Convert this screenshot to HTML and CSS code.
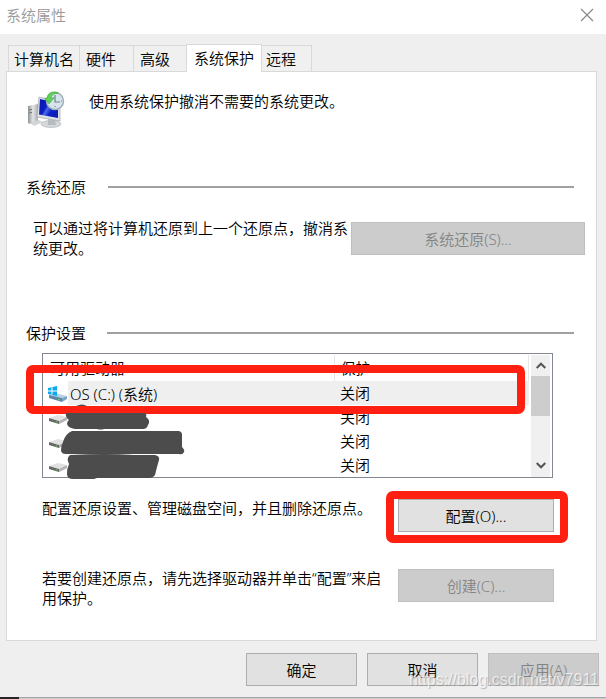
FILE: index.html
```html
<!DOCTYPE html>
<html lang="zh-CN">
<head>
<meta charset="utf-8">
<title>系统属性</title>
<link rel="stylesheet" href="styles.css">
</head>
<body>
<div class="window">
  <header class="titlebar">
    <h1 class="title">系统属性</h1>
    <button class="close" type="button" aria-label="关闭">
      <svg width="14" height="14" viewBox="0 0 14 14"><path d="M1 1L13 13M13 1L1 13" stroke="#858585" stroke-width="1.1" fill="none"/></svg>
    </button>
  </header>

  <nav class="tabs">
    <button class="tab" type="button">计算机名</button>
    <button class="tab" type="button">硬件</button>
    <button class="tab" type="button">高级</button>
    <button class="tab active" type="button">系统保护</button>
    <button class="tab" type="button">远程</button>
  </nav>

  <main class="panel">
    <div class="intro">
      <svg class="intro-icon" width="38" height="38" viewBox="0 0 38 38">
        <defs>
          <linearGradient id="screen" x1="0" y1="0" x2="1" y2=".6"><stop offset="0" stop-color="#0416a8"/><stop offset=".45" stop-color="#0d1fc4"/><stop offset=".55" stop-color="#4a6ce8"/><stop offset=".75" stop-color="#0c20c8"/><stop offset="1" stop-color="#0a1db5"/></linearGradient>
          <linearGradient id="case" x1="0" y1="0" x2="1" y2="0"><stop offset="0" stop-color="#8e9294"/><stop offset=".5" stop-color="#e4e6e7"/><stop offset="1" stop-color="#a9adaf"/></linearGradient>
        </defs>
        <path d="M1 15l10-2v18l-8 2-2-1z" fill="url(#case)"/>
        <path d="M2 19l3-.6M2 22l3-.6" stroke="#6f7476"/>
        <path d="M3 32l9-3 4 2-9 4z" fill="#d2d5d6"/>
        <ellipse cx="24" cy="33" rx="10" ry="3.500" fill="#d5d8da" stroke="#a9aeb1" stroke-width=".6"/>
        <path d="M21 28l7 1 1 5h-8z" fill="#b7bcc0"/>
        <path d="M12 6l21 5v19l-23-4z" fill="#dde1e5" stroke="#9fa6ac" stroke-width=".7"/>
        <path d="M13 8l18 4v15l-19-3.500z" fill="url(#screen)"/>
        <circle cx="28" cy="10" r="8.500" fill="#d7e4ec" stroke="#9eafba" stroke-width="1.500"/>
        <path d="M28 4v7h5M28 15v1M34 10h1" stroke="#6d8291" stroke-width="1.200" fill="none"/>
        <path d="M31 1.500C24-.5 20 3 20.500 7l-3 .2 4.500 5.600 5-6-3 .2C24 4 27 2 31 2.500z" fill="#62cf5a" stroke="#35a83c" stroke-width=".6"/>
      </svg>
      <p>使用系统保护撤消不需要的系统更改。</p>
    </div>

    <section class="restore">
      <h2 class="heading">系统还原</h2>
      <div class="restore-row">
        <p>可以通过将计算机还原到上一个还原点，撤消系统更改。</p>
        <button class="btn wide" type="button" disabled>系统还原(S)...</button>
      </div>
    </section>

    <section class="protection">
      <h2 class="heading second">保护设置</h2>
      <div class="drives">
        <table>
          <colgroup><col class="col-drive"><col></colgroup>
          <thead><tr><th scope="col">可用驱动器</th><th scope="col">保护</th></tr></thead>
          <tbody>
            <tr class="selected">
              <td><svg class="drive" width="20" height="16" viewBox="0 0 20 16"><path d="M1 9l5-2 13 3-5 2z" fill="#b5d1e8"/><path d="M1 9l13 3v4L1 12z" fill="#5c87aa"/><path d="M14 12l5-2v3l-5 3z" fill="#7ba4c5"/><circle cx="11" cy="13.500" r=".8" fill="#56e04a"/><path d="M0 2l3.500-.8V4.500H0zM4.500 1L9 0v4.500H4.500zM0 5.500h3.500v3.300L0 8zM4.500 5.500H9V10l-4.500-1z" fill="#0eabec"/></svg><span>OS (C:) (系统)</span></td>
              <td>关闭</td>
            </tr>
            <tr><td><svg class="drive" width="20" height="16" viewBox="0 0 20 16"><path d="M1 7l9-3 9 2-8 4z" fill="#e1e1e1"/><path d="M1 7l10 3v3L1 10z" fill="#686868"/><path d="M11 10l8-4v3l-8 4z" fill="#b1b1b1"/><circle cx="8.500" cy="10.800" r=".8" fill="#4bcf42"/></svg></td><td>关闭</td></tr>
            <tr><td><svg class="drive" width="20" height="16" viewBox="0 0 20 16"><path d="M1 7l9-3 9 2-8 4z" fill="#e1e1e1"/><path d="M1 7l10 3v3L1 10z" fill="#686868"/><path d="M11 10l8-4v3l-8 4z" fill="#b1b1b1"/><circle cx="8.500" cy="10.800" r=".8" fill="#4bcf42"/></svg></td><td>关闭</td></tr>
            <tr><td><svg class="drive" width="20" height="16" viewBox="0 0 20 16"><path d="M1 7l9-3 9 2-8 4z" fill="#e1e1e1"/><path d="M1 7l10 3v3L1 10z" fill="#686868"/><path d="M11 10l8-4v3l-8 4z" fill="#b1b1b1"/><circle cx="8.500" cy="10.800" r=".8" fill="#4bcf42"/></svg></td><td>关闭</td></tr>
          </tbody>
        </table>
        <div class="scrollbar">
          <svg width="10" height="7" viewBox="0 0 10 7"><path d="M.7 6L5 1.700 9.300 6" stroke="#555" stroke-width="2" fill="none"/></svg>
          <div class="track"><div class="thumb"></div></div>
          <svg width="10" height="7" viewBox="0 0 10 7"><path d="M.7 1L5 5.300 9.300 1" stroke="#555" stroke-width="2" fill="none"/></svg>
        </div>
        <div class="mark mark-row"></div>
        <svg class="scribble" width="126" height="78" viewBox="60 403 126 78" fill="#4c4c4c">
          <path d="M76 406q6-3 11 0z"/>
          <path d="M66 413H145q2 1 1 4 5 3 2 8-1 4-5 4H104q-3 1-7 0H75q-7-1-8-5 0-3 2-4-4-3-3-7z"/>
          <path d="M72 431H178q4 0 4 4V447q3 3 2 5-1 3-5 2H66q-5 0-5-4 0-4 2-8 2-8 9-11z"/>
          <path d="M70 455q36-2 64 0H155q5 1 4 5l-2 7-2 8q-2 3-6 3H97l-3 1H73q-6 0-6-5 0-6 2-10-3-6 1-9z"/>
        </svg>
      </div>

      <div class="action">
        <p>配置还原设置、管理磁盘空间，并且删除还原点。</p>
        <div class="btn-wrap">
          <button class="btn" type="button">配置(O)...</button>
          <div class="mark mark-btn"></div>
        </div>
      </div>
      <div class="action create">
        <p>若要创建还原点，请先选择驱动器并单击“配置”来启用保护。</p>
        <div class="btn-wrap"><button class="btn" type="button" disabled>创建(C)...</button></div>
      </div>
    </section>
  </main>

  <footer class="footer">
    <button class="btn" type="button">确定</button>
    <button class="btn" type="button">取消</button>
    <button class="btn" type="button" disabled>应用(A)</button>
    <span class="watermark">https://blog.csdn.net/v7911</span>
  </footer>
  <div class="edge"><div class="edge-dark"></div></div>
</div>
</body>
</html>
```
FILE: styles.css
```css
* { box-sizing: border-box; }
body {
  margin: 0;
  background: #efefef;
  color: #000;
  font: 350 15px/20px "Noto Sans", "Noto Sans CJK SC", sans-serif;
}
h1, h2, p { margin: 0; font-size: 15px; font-weight: inherit; }
button { font: inherit; color: inherit; padding: 0; }
svg { display: block; }

.window { display: flex; flex-direction: column; min-height: 100vh; }

.titlebar {
  display: flex;
  align-items: center;
  justify-content: space-between;
  height: 34px;
  padding: 0 12px 4px 6px;
  background: #fff;
}
.title { color: #999; }
.close { border: 0; background: none; }

.tabs {
  display: flex;
  align-items: flex-end;
  height: 38px;
  margin-bottom: -1px;
  padding-left: 8px;
}
.tab {
  height: 27px;
  padding: 0 17px 0 6px;
  border: 1px solid #d9d9d9;
  border-left-width: 0;
  background: #f0f0f0;
}
.tab:first-child { border-left-width: 1px; padding: 0 5px; }
.tab:nth-child(3) { border-right: 0; padding-right: 16px; }
.tab:last-child { padding: 0 15px 0 4px; }
.tab.active {
  position: relative;
  z-index: 1;
  height: 28px;
  padding: 0 7px 2px;
  border-left-width: 1px;
  border-bottom: 0;
  background: #fff;
}

.panel {
  flex: 1;
  margin: 0 9px 0 6px;
  padding: 19px 11px 30px 19px;
  border: 1px solid #d9d9d9;
  background: #fff;
}

.intro { display: flex; gap: 24px; }
.intro-icon { margin-left: 1px; }

.heading {
  display: flex;
  align-items: center;
  gap: 22px;
  padding-right: 11px;
}
.heading::after { content: ""; flex: 1; height: 2px; background: #a0a0a0; }
.second { gap: 21px; }

.restore { margin-top: 48px; }
.restore-row {
  display: flex;
  align-items: flex-start;
  margin-top: 21px;
  padding-left: 7px;
}
.restore-row p { flex: 1; }
.protection { margin-top: 65px; }

.btn {
  width: 111px;
  height: 33px;
  border: 1px solid #adadad;
  background: #e1e1e1;
}
.btn:disabled { border-color: #bfbfbf; background: #ccc; color: #838383; }
.wide { flex: none; width: 234px; margin-top: 4px; }

.drives {
  position: relative;
  display: flex;
  margin: 10px 32px 0 16px;
  padding: 1px 2px 0 1px;
  border: 1px solid #828790;
}
table { flex: 1; border-collapse: collapse; table-layout: fixed; }
.col-drive { width: 290px; }
th {
  height: 26px;
  padding: 0 6px;
  border-right: 1px solid #e5e5e5;
  font-weight: inherit;
  text-align: left;
}
td { height: 24px; padding: 0 6px; }
td:first-child { padding-left: 4px; }
.selected td { background: #efefef; }
.selected td:first-child { background: linear-gradient(to right, transparent 24px, #efefef 24px); }
.drive { display: inline-block; margin-right: 2px; vertical-align: middle; }
td span { vertical-align: middle; }

.scrollbar {
  display: flex;
  flex-direction: column;
  align-items: center;
  width: 19px;
  margin-left: 2px;
  padding: 7px 0 8px;
  background: #f0f0f0;
}
.track { flex: 1; width: 100%; padding-top: 7px; }
.thumb { height: 40px; background: #cdcdcd; }

.mark {
  position: absolute;
  border: 8px solid #ff2012;
  border-radius: 7px;
}
.mark-row { left: -17px; right: 27px; top: 11px; height: 49px; }
.mark-btn { left: -12px; right: -14px; top: -8px; height: 52px; }
.scribble { position: absolute; left: 17px; top: 49px; }

.action {
  display: flex;
  align-items: flex-start;
  min-height: 49px;
  margin-top: 20px;
  padding: 0 31px 0 16px;
}
.action p { flex: 1; }
.action.create { margin-top: 21px; min-height: 41px; }
.action.create p { padding-right: 12px; }
.btn-wrap { position: relative; padding-top: 1px; }
.btn-wrap .btn { display: block; width: 156px; }
.mark-btn { top: -7px; }

.footer {
  position: relative;
  display: flex;
  justify-content: flex-end;
  gap: 10px;
  padding: 12px 7px 11px;
}
.watermark {
  position: absolute;
  right: 7px;
  bottom: 7px;
  font: 16px/20px "Liberation Sans", sans-serif;
  color: rgba(255, 255, 255, .7);
  text-shadow: 1px 1px 1px rgba(100, 100, 100, .4);
}
.edge { height: 2px; border-top: 1px solid #a5a5a5; background: #ccc; }
.edge-dark { width: 19px; height: 2px; margin-top: -1px; background: #292526; }
```
